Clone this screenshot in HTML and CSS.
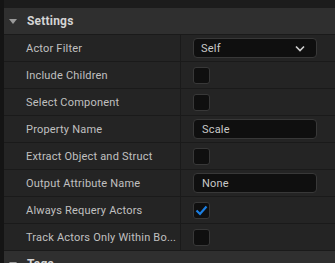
FILE: index.html
```html
<!DOCTYPE html>
<html lang="en">
<head>
    <meta charset="UTF-8">
    <title>Details</title>
    <link rel="stylesheet" href="styles.css">
</head>
<body>
    <div class="panel">
        <div class="topbar"></div>

        <div class="category">
            <span class="arrow"></span>
            <span class="category-name">Settings</span>
        </div>

        <div class="row">
            <div class="label">Actor Filter</div>
            <div class="value">
                <div class="combo">
                    <span>Self</span>
                    <svg width="10" height="7" viewBox="0 0 10 7"><path d="M1 1.5 L5 5.5 L9 1.5" fill="none" stroke="#d0d0d0" stroke-width="1.6"/></svg>
                </div>
            </div>
        </div>
        <div class="row">
            <div class="label">Include Children</div>
            <div class="value"><div class="check"></div></div>
        </div>
        <div class="row">
            <div class="label">Select Component</div>
            <div class="value"><div class="check"></div></div>
        </div>
        <div class="row">
            <div class="label">Property Name</div>
            <div class="value"><div class="textbox">Scale</div></div>
        </div>
        <div class="row">
            <div class="label">Extract Object and Struct</div>
            <div class="value"><div class="check"></div></div>
        </div>
        <div class="row">
            <div class="label">Output Attribute Name</div>
            <div class="value"><div class="textbox">None</div></div>
        </div>
        <div class="row">
            <div class="label">Always Requery Actors</div>
            <div class="value">
                <div class="check">
                    <svg width="13" height="11" viewBox="0 0 13 11"><path d="M1.5 5.5 L5 9 L11.5 1.5" fill="none" stroke="#1b7fe3" stroke-width="2.2"/></svg>
                </div>
            </div>
        </div>
        <div class="row">
            <div class="label">Track Actors Only Within Bo...</div>
            <div class="value"><div class="check"></div></div>
        </div>

        <div class="category">
            <span class="arrow"></span>
            <span class="category-name">Tags</span>
        </div>
    </div>
</body>
</html>
```

FILE: styles.css
```css
body {
    margin: 0;
    background: #1a1a1a;
    font-family: Roboto, "Noto Sans", sans-serif;
    font-size: 11px;
    letter-spacing: 0.2px;
    color: #c0c0c0;
    overflow: hidden;
}
.panel {
    height: 263px;
    border-left: 4px solid #141414;
    background: #1a1a1a;
}
.topbar {
    height: 8px;
    background: #1c1c1c;
}
.category {
    height: 26px;
    display: flex;
    align-items: center;
    background: #2f2f2f;
    border-bottom: 1px solid #1a1a1a;
}
.arrow {
    width: 0;
    height: 0;
    margin-left: 5px;
    margin-right: 10px;
    border-left: 4px solid transparent;
    border-right: 4px solid transparent;
    border-top: 5px solid #9a9a9a;
}
.category-name {
    font-weight: bold;
    font-size: 12px;
    color: #d4d4d4;
}
.row {
    height: 26px;
    display: flex;
    background: #242424;
    border-bottom: 1px solid #1a1a1a;
}
.label {
    width: 154px;
    padding-left: 22px;
    display: flex;
    align-items: center;
    border-right: 1px solid #1a1a1a;
    white-space: nowrap;
    overflow: hidden;
}
.value {
    flex: 1;
    display: flex;
    align-items: center;
    padding-left: 12px;
}
.combo, .textbox {
    width: 124px;
    height: 20px;
    box-sizing: border-box;
    background: #0f0f0f;
    border: 1px solid #383838;
    border-radius: 4px;
    display: flex;
    align-items: center;
    color: #c8c8c8;
}
.combo {
    justify-content: space-between;
    padding: 0 11px 0 7px;
}
.textbox {
    padding-left: 8px;
}
.check {
    width: 17px;
    height: 17px;
    box-sizing: border-box;
    background: #0f0f0f;
    border: 1px solid #383838;
    border-radius: 3px;
    display: flex;
    align-items: center;
    justify-content: center;
}
```
